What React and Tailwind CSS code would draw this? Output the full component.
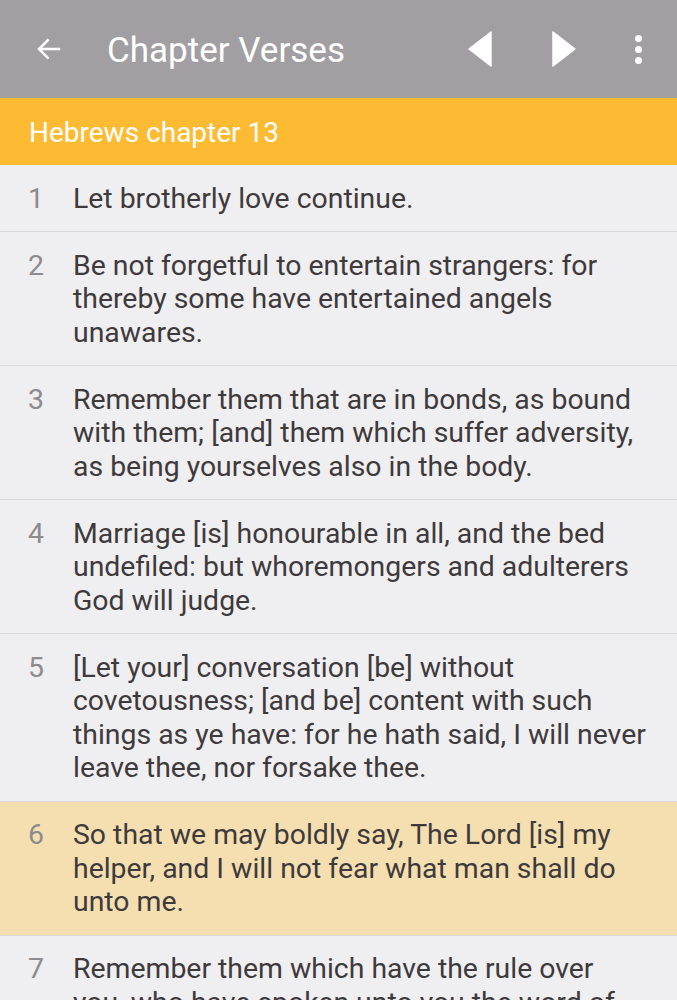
import React from "react";

const verses = [
  { n: 1, text: "Let brotherly love continue." },
  {
    n: 2,
    text: "Be not forgetful to entertain strangers: for thereby some have entertained angels unawares.",
  },
  {
    n: 3,
    text: "Remember them that are in bonds, as bound with them; [and] them which suffer adversity, as being yourselves also in the body.",
  },
  {
    n: 4,
    text: "Marriage [is] honourable in all, and the bed undefiled: but whoremongers and adulterers God will judge.",
  },
  {
    n: 5,
    text: "[Let your] conversation [be] without covetousness; [and be] content with such things as ye have: for he hath said, I will never leave thee, nor forsake thee.",
  },
  {
    n: 6,
    text: "So that we may boldly say, The Lord [is] my helper, and I will not fear what man shall do unto me.",
    active: true,
  },
  {
    n: 7,
    text: "Remember them which have the rule over you, who have spoken unto you the word of God: whose faith follow, considering the end of [their] conversation.",
  },
];

const BackArrow = () => (
  <svg width="30" height="30" viewBox="0 0 24 24" fill="none">
    <path
      d="M20 12H4.5M11 5l-7 7 7 7"
      stroke="white"
      strokeWidth="2"
      strokeLinecap="square"
    />
  </svg>
);

const VerseRow = ({ n, text, active }) => (
  <div
    className={`flex border-b border-[#d9d8da] pt-[16.5px] pb-[16px] ${
      active ? "bg-[#f5dfb0]" : "bg-[#efeef0]"
    }`}
  >
    <div className="w-[73px] shrink-0 pl-[28px] text-[#8d8b8d]">{n}</div>
    <div className="pr-[28px] text-[#3e3a3b]">{text}</div>
  </div>
);

export default function App() {
  return (
    <div
      className="w-[677px] h-[1000px] overflow-hidden bg-[#efeef0]"
      style={{ fontFamily: "Roboto, 'Noto Sans', sans-serif" }}
    >
      <div className="h-[98px] bg-[#a19fa2] flex items-center text-white">
        <div className="w-[107px] pl-[34px] flex items-center">
          <BackArrow />
        </div>
        <div className="flex-1 text-[35px] leading-none pt-[2px]">Chapter Verses</div>
        <div className="flex items-center">
          <svg width="24" height="36" viewBox="0 0 24 36" className="mr-[60px]">
            <path d="M23 1v34L1 18z" fill="white" strokeLinejoin="round" stroke="white" strokeWidth="1.5" />
          </svg>
          <svg width="24" height="36" viewBox="0 0 24 36" className="mr-[59px]">
            <path d="M1 1v34l22-17z" fill="white" strokeLinejoin="round" stroke="white" strokeWidth="1.5" />
          </svg>
          <div className="flex flex-col gap-[4px] mr-[35px]">
            <span className="w-[7px] h-[7px] rounded-full bg-white" />
            <span className="w-[7px] h-[7px] rounded-full bg-white" />
            <span className="w-[7px] h-[7px] rounded-full bg-white" />
          </div>
        </div>
      </div>
      <div className="h-[67px] bg-[#fdbb34] flex items-center pl-[29px] pt-[2px] text-white text-[28px]">
        Hebrews chapter 13
      </div>
      <div className="text-[28.4px] leading-[33.5px]">
        {verses.map((v) => (
          <VerseRow key={v.n} {...v} />
        ))}
      </div>
    </div>
  );
}
